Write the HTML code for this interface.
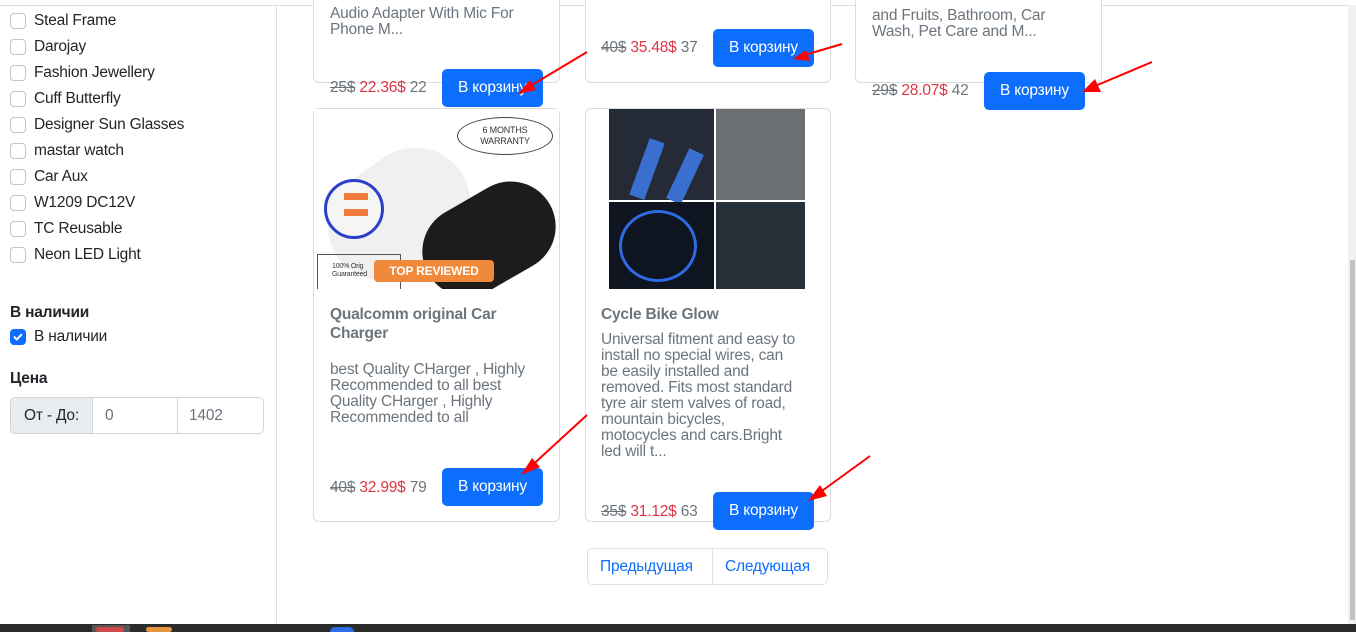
<!DOCTYPE html>
<html><head><meta charset="utf-8"><style>
*{box-sizing:border-box;margin:0;padding:0}
body{width:1356px;height:632px;overflow:hidden;background:#fff;font-family:"Liberation Sans",sans-serif;font-size:15px;color:#212529;position:relative;letter-spacing:-0.2px}
.a{position:absolute;white-space:nowrap}
.cb{position:absolute;left:10px;width:16px;height:16px;border:1px solid #bfc4c9;border-radius:4px;background:#fff}
.lbl{position:absolute;left:34px;font-size:15.5px;line-height:20px}
.card{position:absolute;border:1px solid #dcdcdc;border-radius:6px;background:#fff}
.g{color:#6c757d}
.btn{position:absolute;background:#0d6efd;color:#fff;border-radius:5px;height:38px;font-size:15.5px;line-height:38px;text-align:center;width:101px}
.pr{position:absolute;font-size:15.5px;color:#6c757d;line-height:20px}
.pr s{color:#6c757d}.pr b{font-weight:normal;color:#dc3545}
.desc{position:absolute;color:#6c757d;font-size:15.5px;line-height:16px;white-space:pre}
.ttl{position:absolute;color:#6c757d;font-weight:bold;font-size:15.5px;line-height:19px;white-space:pre}
</style></head><body>
<div class="a" style="left:0;top:5px;width:1356px;height:1px;background:#dcdcdc"></div>
<div class="a" style="left:276px;top:5px;width:1px;height:619px;background:#dee2e6"></div>
<div class="a" style="left:1348px;top:5px;width:8px;height:619px;background:#f1f1f1"></div>
<div class="a" style="left:1350px;top:260px;width:5px;height:360px;background:#c1c1c1"></div>
<div class="a" style="left:0;top:624px;width:1356px;height:8px;background:#2b2b2b"></div>
<div class="a" style="left:92px;top:625px;width:38px;height:7px;background:#555"></div>
<div class="a" style="left:96px;top:627px;width:28px;height:5px;background:#d04848;border-radius:3px"></div>
<div class="a" style="left:146px;top:627px;width:26px;height:5px;background:#e89540;border-radius:3px"></div>
<div class="a" style="left:330px;top:627px;width:24px;height:5px;background:#2a6ee8;border-radius:8px 8px 0 0"></div>

<div class="cb" style="top:13px"></div><div class="lbl" style="top:11px">Steal Frame</div>
<div class="cb" style="top:39px"></div><div class="lbl" style="top:37px">Darojay</div>
<div class="cb" style="top:65px"></div><div class="lbl" style="top:63px">Fashion Jewellery</div>
<div class="cb" style="top:91px"></div><div class="lbl" style="top:89px">Cuff Butterfly</div>
<div class="cb" style="top:117px"></div><div class="lbl" style="top:115px">Designer Sun Glasses</div>
<div class="cb" style="top:143px"></div><div class="lbl" style="top:141px">mastar watch</div>
<div class="cb" style="top:169px"></div><div class="lbl" style="top:167px">Car Aux</div>
<div class="cb" style="top:195px"></div><div class="lbl" style="top:193px">W1209 DC12V</div>
<div class="cb" style="top:221px"></div><div class="lbl" style="top:219px">TC Reusable</div>
<div class="cb" style="top:247px"></div><div class="lbl" style="top:245px">Neon LED Light</div>
<div class="a" style="left:10px;top:303px;font-weight:bold;font-size:15.5px;line-height:20px">В наличии</div>
<div class="cb" style="top:329px;background:#0d6efd;border-color:#0d6efd"><svg width="14" height="14" viewBox="0 0 14 14" style="position:absolute;left:0;top:0"><path d="M3.5 7.2l2.3 2.3 4.5-4.8" stroke="#fff" stroke-width="2" fill="none" stroke-linecap="round" stroke-linejoin="round"/></svg></div>
<div class="lbl" style="top:327px">В наличии</div>
<div class="a" style="left:10px;top:369px;font-weight:bold;font-size:15.5px;line-height:20px">Цена</div>
<div class="a" style="left:10px;top:397px;width:254px;height:37px;border:1px solid #ced4da;border-radius:5px;overflow:hidden">
<div class="a" style="left:0;top:0;width:82px;height:35px;background:#e9ecef;border-right:1px solid #ced4da;text-align:center;line-height:35px;font-size:15.5px">От - До:</div>
<div class="a" style="left:94px;top:0;line-height:35px;color:#6c757d;font-size:15.5px">0</div>
<div class="a" style="left:166px;top:0;width:1px;height:35px;background:#ced4da"></div>
<div class="a" style="left:178px;top:0;line-height:35px;color:#6c757d;font-size:15.5px">1402</div>
</div>

<!-- top row -->
<div class="card" style="left:313px;top:-10px;width:247px;height:93px"></div>
<div class="desc" style="left:330px;top:6px">Audio Adapter With Mic For
Phone M...</div>
<div class="pr" style="left:330px;top:78px"><s>25$</s> <b>22.36$</b> 22</div>
<div class="btn" style="left:442px;top:69px">В корзину</div>

<div class="card" style="left:585px;top:-10px;width:246px;height:93px"></div>
<div class="pr" style="left:601px;top:38px"><s>40$</s> <b>35.48$</b> 37</div>
<div class="btn" style="left:713px;top:29px">В корзину</div>

<div class="card" style="left:855px;top:-10px;width:247px;height:93px"></div>
<div class="desc" style="left:872px;top:8px">and Fruits, Bathroom, Car
Wash, Pet Care and M...</div>
<div class="pr" style="left:872px;top:81px"><s>29$</s> <b>28.07$</b> 42</div>
<div class="btn" style="left:984px;top:72px">В корзину</div>

<!-- row 2 card 1 -->
<div class="card" style="left:313px;top:108px;width:247px;height:414px"></div>
<div class="a" style="left:314px;top:109px;width:245px;height:180px;background:#fff;overflow:hidden">
<div class="a" style="left:10px;top:50px;width:150px;height:110px;background:#f0f0f0;border-radius:55px;transform:rotate(-35deg)"></div>
<div class="a" style="left:10px;top:70px;width:60px;height:60px;border:3px solid #2a3fc8;border-radius:50%;background:#f5f5f5"></div>
<div class="a" style="left:30px;top:84px;width:24px;height:7px;background:#f07a3a"></div>
<div class="a" style="left:30px;top:100px;width:24px;height:7px;background:#f07a3a"></div>
<div class="a" style="left:105px;top:85px;width:140px;height:90px;background:#1e1b1b;border-radius:45px;transform:rotate(-30deg)"></div>
<div class="a" style="left:143px;top:8px;width:96px;height:38px;border:1px solid #444;border-radius:50%;font-size:9px;text-align:center;line-height:11px;padding-top:7px;color:#333">6 MONTHS<br>WARRANTY</div>
<div class="a" style="left:3px;top:145px;width:84px;height:36px;border:1px solid #555;font-size:7px;color:#333;padding:8px 0 0 14px;line-height:8px">100% Orig<br>Guaranteed</div>
<div class="a" style="left:60px;top:151px;width:120px;height:22px;background:#f08a3a;border-radius:4px;color:#fff;font-weight:bold;font-size:12px;text-align:center;line-height:22px">TOP REVIEWED</div>
</div>
<div class="ttl" style="left:330px;top:305px">Qualcomm original Car
Charger</div>
<div class="desc" style="left:330px;top:362px">best Quality CHarger , Highly
Recommended to all best
Quality CHarger , Highly
Recommended to all</div>
<div class="pr" style="left:330px;top:478px"><s>40$</s> <b>32.99$</b> 79</div>
<div class="btn" style="left:442px;top:468px">В корзину</div>

<!-- row 2 card 2 -->
<div class="card" style="left:585px;top:108px;width:246px;height:414px"></div>
<div class="a" style="left:609px;top:109px;width:196px;height:180px;background:#fff">
<div class="a" style="left:0;top:0;width:105px;height:91px;background:#242b36"><div class="a" style="left:30px;top:30px;width:16px;height:60px;background:#3a6fd0;transform:rotate(20deg)"></div><div class="a" style="left:68px;top:40px;width:16px;height:55px;background:#3a6fd0;transform:rotate(25deg)"></div></div>
<div class="a" style="left:107px;top:0;width:89px;height:91px;background:#6b6e72"></div>
<div class="a" style="left:0;top:93px;width:105px;height:87px;background:#0e1520"><div class="a" style="left:10px;top:8px;width:78px;height:72px;border:3px solid #2f6be0;border-radius:50%"></div></div>
<div class="a" style="left:107px;top:93px;width:89px;height:87px;background:#253038"></div>
</div>
<div class="ttl" style="left:601px;top:305px">Cycle Bike Glow</div>
<div class="desc" style="left:601px;top:332px">Universal fitment and easy to
install no special wires, can
be easily installed and
removed. Fits most standard
tyre air stem valves of road,
mountain bicycles,
motocycles and cars.Bright
led will t...</div>
<div class="pr" style="left:601px;top:502px"><s>35$</s> <b>31.12$</b> 63</div>
<div class="btn" style="left:713px;top:492px">В корзину</div>

<!-- pagination -->
<div class="a" style="left:587px;top:548px;width:241px;height:37px;border:1px solid #dee2e6;border-radius:5px"></div>
<div class="a" style="left:712px;top:548px;width:1px;height:37px;background:#dee2e6"></div>
<div class="a" style="left:600px;top:557px;color:#0d6efd;font-size:15.5px;line-height:20px">Предыдущая</div>
<div class="a" style="left:725px;top:557px;color:#0d6efd;font-size:15.5px;line-height:20px">Следующая</div>

<svg class="a" style="left:0;top:0" width="1356" height="632">
<defs><marker id="m" markerWidth="8" markerHeight="8" refX="6" refY="4" orient="auto" markerUnits="userSpaceOnUse" viewBox="0 0 8 8"><path d="M0 0L8 4L0 8z" fill="#f00"/></marker></defs>
<g stroke="#f00" stroke-width="2" fill="none">
<line x1="587" y1="52" x2="522" y2="91"/><path d="M530 80L518 94L536 90z" fill="#f00" stroke="none"/>
<line x1="842" y1="44" x2="798" y2="57"/><path d="M806 50L793 59L810 61z" fill="#f00" stroke="none"/>
<line x1="1152" y1="62" x2="1088" y2="89"/><path d="M1095 79L1082 92L1101 92z" fill="#f00" stroke="none"/>
<line x1="587" y1="415" x2="527" y2="470"/><path d="M532 458L521 475L540 467z" fill="#f00" stroke="none"/>
<line x1="870" y1="456" x2="815" y2="496"/><path d="M820 485L808 501L827 496z" fill="#f00" stroke="none"/>
</g></svg>
</body></html>
